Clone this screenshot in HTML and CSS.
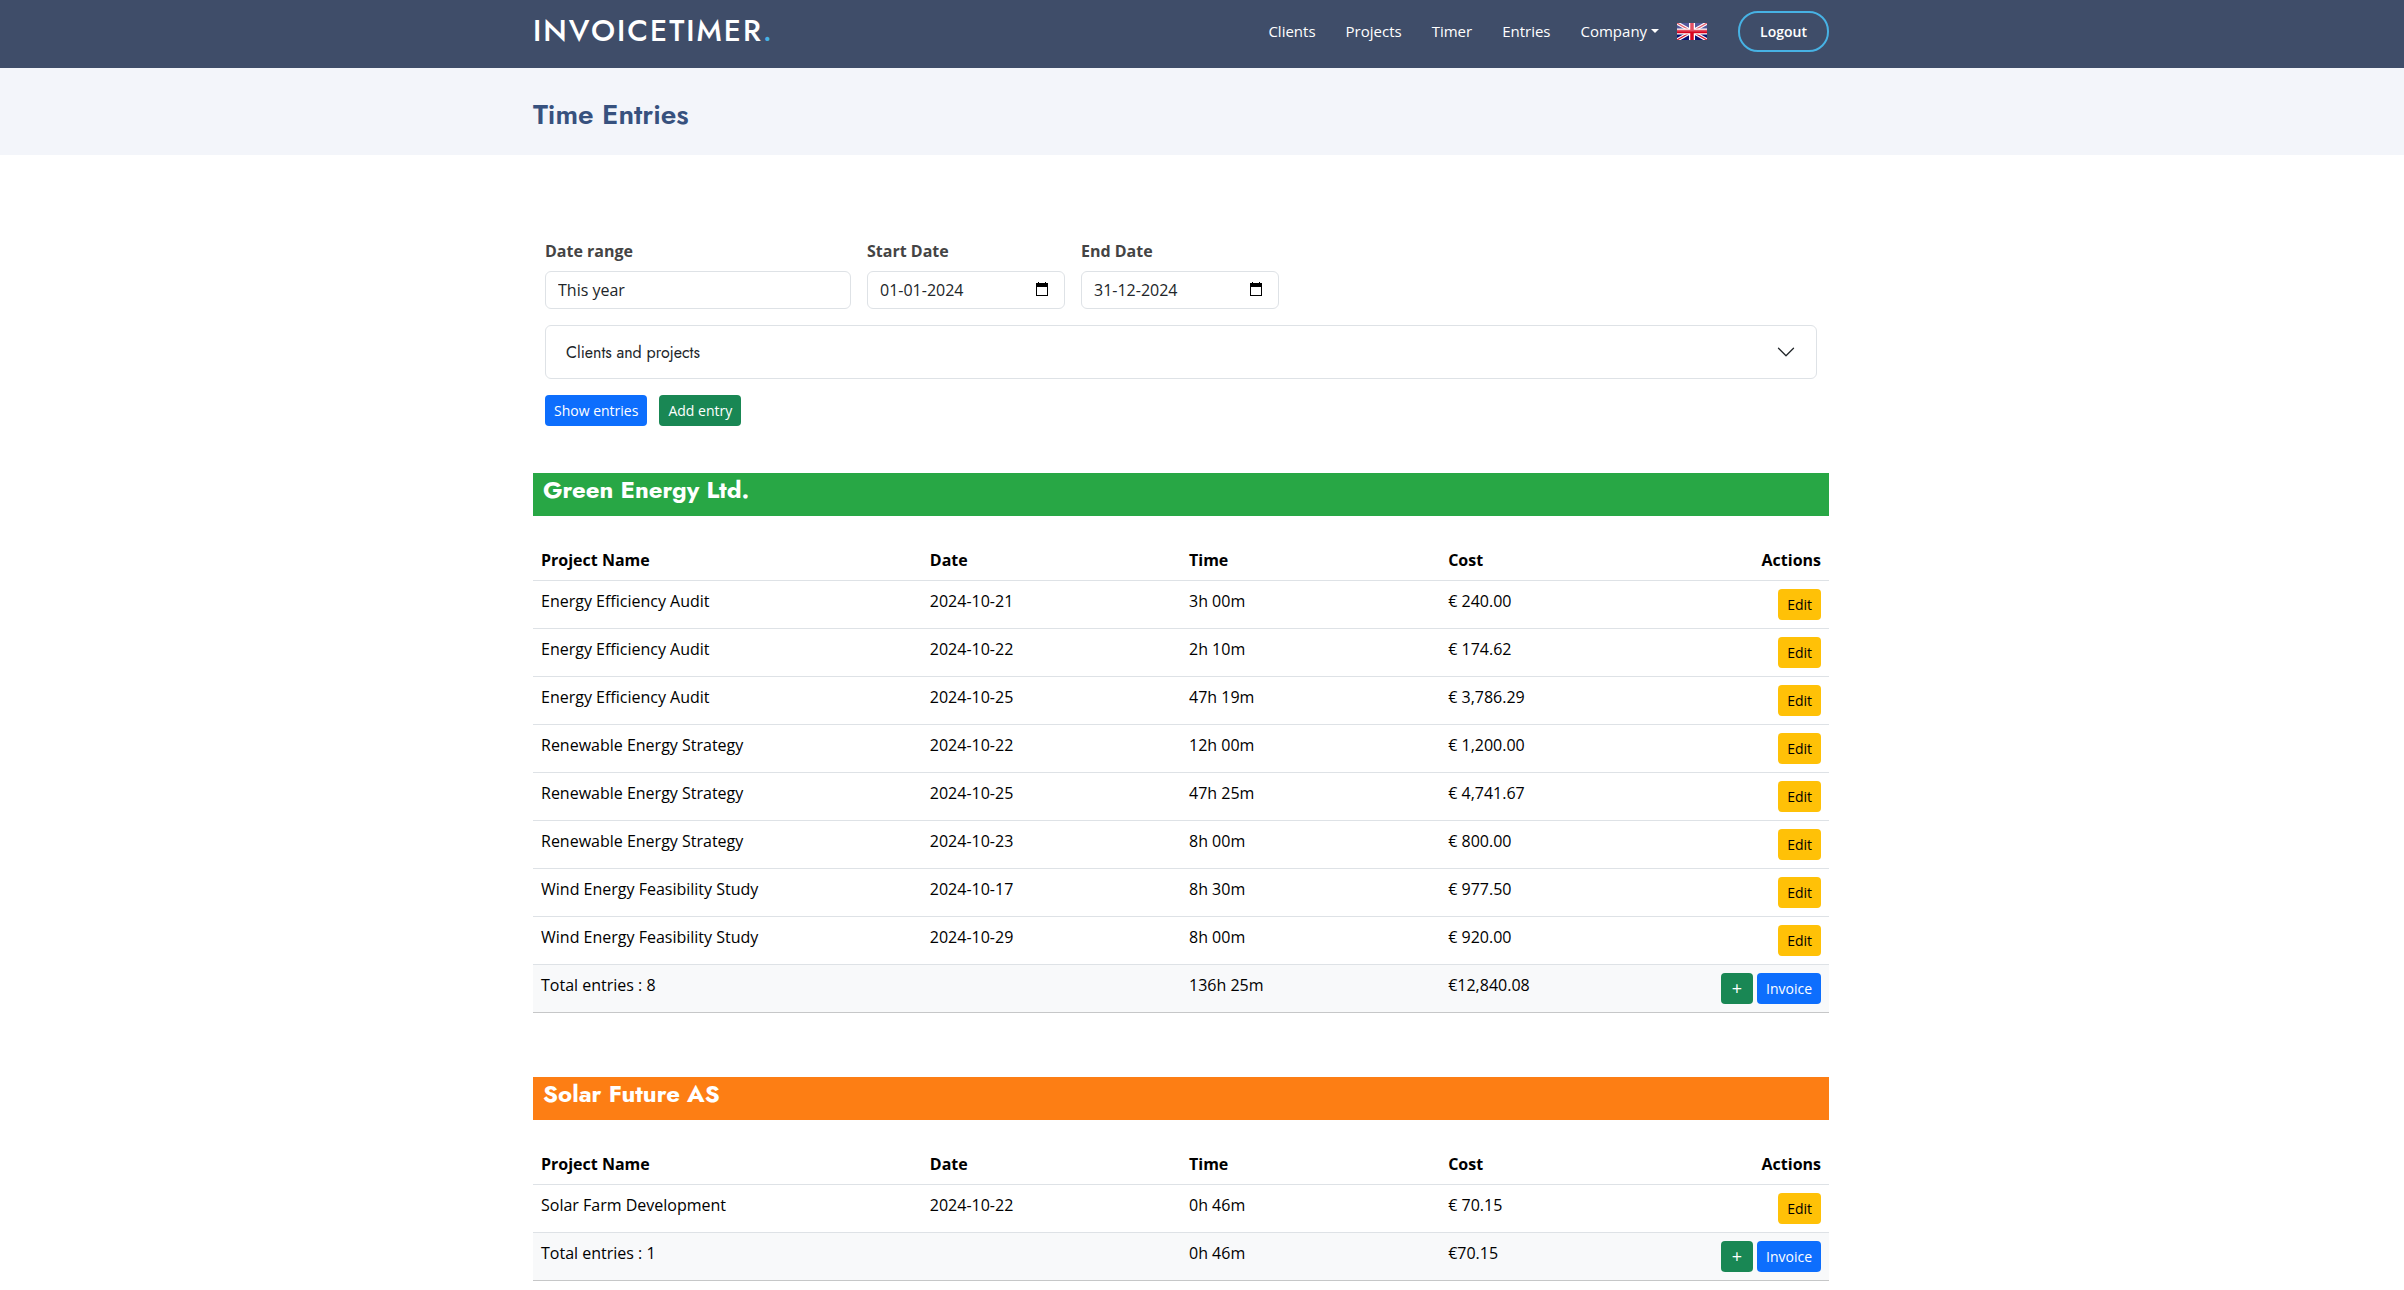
FILE: index.html
```html
<!DOCTYPE html>
<html lang="en">
<head>
  <meta charset="UTF-8">
  <meta name="viewport" content="width=device-width, initial-scale=1.0">
  <title>Time Entries - InvoiceTimer</title>
  <link rel="stylesheet" href="styles.css">
</head>
<body>
  <header class="header">
    <div class="container header-inner">
      <a class="logo" href="#">INVOICETIMER<span>.</span></a>
      <nav class="navbar">
        <a class="nav-link" href="#">Clients</a>
        <a class="nav-link" href="#">Projects</a>
        <a class="nav-link" href="#">Timer</a>
        <a class="nav-link" href="#">Entries</a>
        <a class="nav-link dropdown" href="#">Company</a>
        <a class="flag" href="#" aria-label="English">
          <svg width="30" height="17" viewBox="0 0 30 17">
            <rect width="30" height="17" fill="#0a0f72"/>
            <path d="M0 0L30 17M30 0L0 17" stroke="#fff" stroke-width="3.500"/>
            <path d="M0 0L30 17M30 0L0 17" stroke="#d8182f" stroke-width="1.200"/>
            <path d="M15 0V17M0 8.500H30" stroke="#fff" stroke-width="6"/>
            <path d="M15 0V17M0 8.500H30" stroke="#d8041f" stroke-width="3.500"/>
            <rect width="30" height="8.500" fill="#fff" fill-opacity=".3"/>
          </svg>
        </a>
        <a class="logout" href="#">Logout</a>
      </nav>
    </div>
  </header>

  <section class="breadcrumbs">
    <div class="container">
      <h2>Time Entries</h2>
    </div>
  </section>

  <main class="main">
    <div class="container">
      <form class="filter">
        <div class="filter-row">
          <div class="field field-wide">
            <label for="range">Date range</label>
            <select id="range">
              <option>This year</option>
              <option>This month</option>
            </select>
          </div>
          <div class="field">
            <label for="start">Start Date</label>
            <div class="date-box">
              <input id="start" type="text" value="01-01-2024">
              <svg width="16" height="16" viewBox="0 0 16 16"><path fill="#000" fill-rule="evenodd" d="M4 1h1v1h6V1h1v1h2v13H2V2h2zM3 6v8h10V6z"/></svg>
            </div>
          </div>
          <div class="field">
            <label for="end">End Date</label>
            <div class="date-box">
              <input id="end" type="text" value="31-12-2024">
              <svg width="16" height="16" viewBox="0 0 16 16"><path fill="#000" fill-rule="evenodd" d="M4 1h1v1h6V1h1v1h2v13H2V2h2zM3 6v8h10V6z"/></svg>
            </div>
          </div>
        </div>
        <button class="accordion" type="button">
          Clients and projects
          <svg width="20" height="20" viewBox="0 0 16 16"><path d="M2 5l6 6 6-6" fill="none" stroke="#212529" stroke-linecap="round" stroke-linejoin="round"/></svg>
        </button>
        <div class="filter-buttons">
          <button class="btn btn-primary" type="submit">Show entries</button>
          <button class="btn btn-success" type="button">Add entry</button>
        </div>
      </form>

      <section class="client">
        <h4 class="client-name green">Green Energy Ltd.</h4>
        <table class="table">
          <thead>
            <tr><th class="col-name">Project Name</th><th class="col">Date</th><th class="col">Time</th><th class="col">Cost</th><th class="actions">Actions</th></tr>
          </thead>
          <tbody>
            <tr><td>Energy Efficiency Audit</td><td>2024-10-21</td><td>3h 00m</td><td>€ 240.00</td><td class="actions"><button class="btn btn-warning">Edit</button></td></tr>
            <tr><td>Energy Efficiency Audit</td><td>2024-10-22</td><td>2h 10m</td><td>€ 174.62</td><td class="actions"><button class="btn btn-warning">Edit</button></td></tr>
            <tr><td>Energy Efficiency Audit</td><td>2024-10-25</td><td>47h 19m</td><td>€ 3,786.29</td><td class="actions"><button class="btn btn-warning">Edit</button></td></tr>
            <tr><td>Renewable Energy Strategy</td><td>2024-10-22</td><td>12h 00m</td><td>€ 1,200.00</td><td class="actions"><button class="btn btn-warning">Edit</button></td></tr>
            <tr><td>Renewable Energy Strategy</td><td>2024-10-25</td><td>47h 25m</td><td>€ 4,741.67</td><td class="actions"><button class="btn btn-warning">Edit</button></td></tr>
            <tr><td>Renewable Energy Strategy</td><td>2024-10-23</td><td>8h 00m</td><td>€ 800.00</td><td class="actions"><button class="btn btn-warning">Edit</button></td></tr>
            <tr><td>Wind Energy Feasibility Study</td><td>2024-10-17</td><td>8h 30m</td><td>€ 977.50</td><td class="actions"><button class="btn btn-warning">Edit</button></td></tr>
            <tr><td>Wind Energy Feasibility Study</td><td>2024-10-29</td><td>8h 00m</td><td>€ 920.00</td><td class="actions"><button class="btn btn-warning">Edit</button></td></tr>
          </tbody>
          <tfoot>
            <tr><td>Total entries : 8</td><td></td><td>136h 25m</td><td>€12,840.08</td><td class="actions"><button class="btn btn-success btn-add">+</button> <button class="btn btn-primary">Invoice</button></td></tr>
          </tfoot>
        </table>
      </section>

      <section class="client">
        <h4 class="client-name orange">Solar Future AS</h4>
        <table class="table">
          <thead>
            <tr><th class="col-name">Project Name</th><th class="col">Date</th><th class="col">Time</th><th class="col">Cost</th><th class="actions">Actions</th></tr>
          </thead>
          <tbody>
            <tr><td>Solar Farm Development</td><td>2024-10-22</td><td>0h 46m</td><td>€ 70.15</td><td class="actions"><button class="btn btn-warning">Edit</button></td></tr>
          </tbody>
          <tfoot>
            <tr><td>Total entries : 1</td><td></td><td>0h 46m</td><td>€70.15</td><td class="actions"><button class="btn btn-success btn-add">+</button> <button class="btn btn-primary">Invoice</button></td></tr>
          </tfoot>
        </table>
      </section>
    </div>
  </main>
</body>
</html>
```
FILE: styles.css
```css
* {
  box-sizing: border-box;
}
body {
  margin: 0;
  font-family: "Open Sans", sans-serif;
  font-size: 16px;
  line-height: 24px;
  color: #444;
  background: #fff;
}
.header, .breadcrumbs, .main {
  padding-right: 42px;
}
a {
  text-decoration: none;
}
.container {
  max-width: 1320px;
  margin: 0 auto;
  padding: 0 12px;
}

/* header */
.header {
  background: #3f4d69;
}
.header-inner {
  display: flex;
  justify-content: space-between;
  align-items: center;
  height: 68px;
  padding-bottom: 6px;
}
.logo {
  font-family: Jost, Lato, sans-serif;
  font-size: 30px;
  font-weight: 500;
  letter-spacing: 2px;
  color: #fff;
}
.logo span {
  color: #47b2e4;
}
.navbar {
  display: flex;
  align-items: center;
}
.nav-link {
  margin-left: 30px;
  font-size: 15px;
  font-weight: 500;
  color: #fff;
}
.dropdown::after {
  content: "";
  display: inline-block;
  margin-left: 4px;
  vertical-align: 4px;
  border: 4px solid transparent;
  border-top-color: #fff;
  border-bottom: 0;
}
.flag {
  display: flex;
  margin-left: 18px;
}
.logout {
  margin-left: 31px;
  padding: 8px 20px;
  border: 2px solid #47b2e4;
  border-radius: 20px;
  font-size: 14px;
  font-weight: 600;
  line-height: 21px;
  color: #fff;
}

/* page title */
.breadcrumbs {
  background: #f3f5fa;
}
.breadcrumbs h2 {
  margin: 0;
  padding: 30px 0 23px;
  font-family: Jost, Lato, sans-serif;
  font-size: 28px;
  font-weight: 600;
  line-height: 34px;
  color: #37517e;
}

/* filter */
.filter {
  padding: 84px 12px 0;
}
.filter-row {
  display: flex;
  gap: 16px;
}
.field {
  width: 198px;
}
.field-wide {
  width: 306px;
}
.field label {
  display: block;
  margin-bottom: 8px;
  font-weight: 700;
}
.field select, .field input {
  display: block;
  width: 100%;
  height: 38px;
  padding: 6px 12px;
  border: 1px solid #dee2e6;
  border-radius: 6px;
  background: #fff;
  font: inherit;
  color: #212529;
  appearance: none;
}
.date-box {
  position: relative;
}
.date-box svg {
  position: absolute;
  top: 10px;
  right: 15px;
}
.accordion {
  display: flex;
  justify-content: space-between;
  align-items: center;
  width: 100%;
  height: 54px;
  margin-top: 16px;
  padding: 0 20px;
  border: 1px solid #dee2e6;
  border-radius: 6px;
  background: #fff;
  font-family: Jost, Lato, sans-serif;
  font-size: 16px;
  color: #212529;
}
.filter-buttons {
  display: flex;
  gap: 12px;
  margin-top: 16px;
}
.btn {
  padding: 4px 8px;
  border: 1px solid transparent;
  border-radius: 4px;
  font-family: inherit;
  font-size: 14px;
  line-height: 21px;
  vertical-align: top;
  cursor: pointer;
}
.btn-primary {
  background: #0d6efd;
  color: #fff;
}
.btn-success {
  background: #198754;
  color: #fff;
}
.btn-warning {
  background: #ffc107;
  color: #000;
}
.btn-add {
  width: 32px;
  font-size: 18px;
  font-weight: 500;
}

/* clients */
.client {
  margin-top: 64px;
}
.filter + .client {
  margin-top: 47px;
}
.client-name {
  height: 43px;
  margin: 0 0 24px;
  padding: 0 10px;
  font-family: Jost, Lato, sans-serif;
  font-size: 24px;
  font-weight: 700;
  line-height: 34px;
  color: #fff;
}
.green {
  background: #28a745;
}
.orange {
  background: #fd7e14;
}
.table {
  width: 100%;
  table-layout: fixed;
  border-collapse: separate;
  border-spacing: 0;
  color: #000;
}
.table th, .table td {
  padding: 8px;
  border-bottom: 1px solid #dee2e6;
  text-align: left;
  vertical-align: top;
}
.table tfoot td {
  background: #f8f9fa;
  border-bottom-color: #c6c7c8;
}
.table .actions {
  text-align: right;
}
.col-name {
  width: 30%;
}
.col {
  width: 20%;
}
```
